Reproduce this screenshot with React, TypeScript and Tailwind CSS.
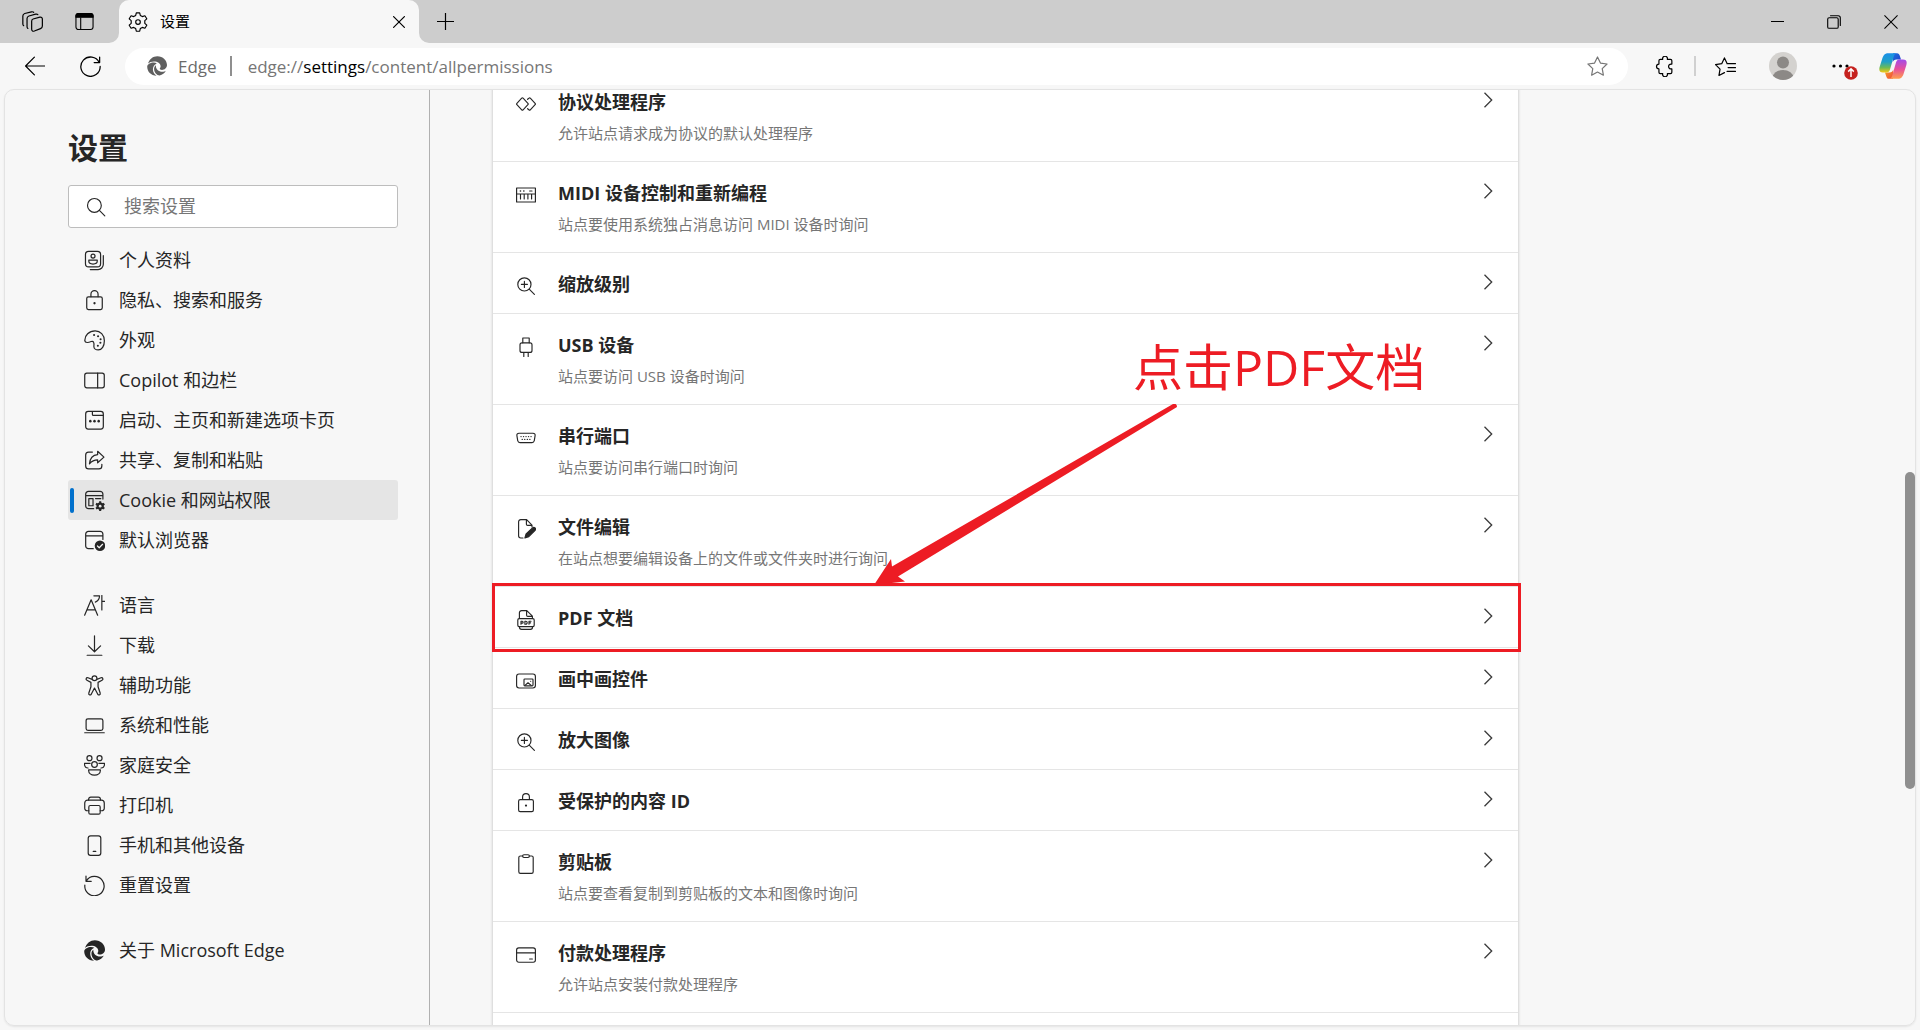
import React from "react";

type IconProps = { className?: string; children: React.ReactNode };

function Svg({ className = "size-5", children }: IconProps) {
  return (
    <svg
      viewBox="0 0 20 20"
      className={className}
      fill="none"
      stroke="currentColor"
      strokeWidth={1.15}
      strokeLinecap="round"
      strokeLinejoin="round"
      aria-hidden="true"
    >
      {children}
    </svg>
  );
}

const edgeSwirl = (
  <g fill="currentColor" stroke="none">
    <path d="M1 7.5C2.5 3 6 .2 10.3 .2C16 .2 20 4.5 20 9C20 12 17.5 13.9 15 13.9C13.6 13.9 12.8 13.3 12.8 12.7C12.8 12.2 13.6 11.6 13.6 10.2C13.6 7.4 10.6 5.4 7 5.4C4.6 5.4 2.4 6.2 1 7.5Z" />
    <path d="M.2 10.5C.6 8.2 3.6 6.6 6.6 6.6C8 6.6 9 6.9 9.8 7.4C7.4 8.2 5.9 10.6 5.9 13.2C5.9 16 7.4 18.4 9.6 19.8C4 19.6 .1 15.6 .2 10.5Z" />
    <path d="M8.9 9.3C7.6 10.2 7.1 11.6 7.1 13.1C7.1 16.6 9.8 19.6 12.6 19.6C15.4 18.8 17.6 17.2 18.9 14.8C17.9 15.5 16.8 15.8 15.3 15.8C11.6 15.8 8.6 13.2 8.9 9.3Z" />
  </g>
);

const lock = (
  <>
    <rect x="2.6" y="6.6" width="14.8" height="12" rx="1.6" />
    <path d="M6.6 6.4V4a3.4 3.4 0 0 1 6.8 0v2.4" />
    <circle cx="10" cy="12.6" r="1.1" fill="currentColor" stroke="none" />
  </>
);

const zoomIn = (
  <>
    <circle cx="8.4" cy="8.4" r="6.6" />
    <path d="M13.2 13.2l5.2 5.2M8.4 5.4v6M5.4 8.4h6" />
  </>
);

const icons: Record<string, React.ReactNode> = {
  profile: (
    <>
      <rect x="1.4" y="1.4" width="14.4" height="14.6" rx="3" />
      <circle cx="8.6" cy="5.8" r="1.9" />
      <path d="M4.6 9.6h8v1.2c0 1.6-1.8 2.6-4 2.6s-4-1-4-2.6z" />
      <path d="M18.4 5.4v8.2a5 5 0 0 1-5 5H6" />
    </>
  ),
  lock,
  palette: (
    <>
      <path d="M.8 10.4C.4 5 5 .8 10.6.8c5 0 8.8 3.8 8.8 9.4 0 5-2.4 8.8-5.8 8.8-2.2 0-4.2-1.4-4.2-3.4 0-1.6.4-2.4-.2-3.8-.4-1-1.2-1.2-2.4-.8-2 .8-5.7 1.8-6-.6z" />
      <g fill="currentColor" stroke="none">
        <circle cx="9.6" cy="4.8" r="1" />
        <circle cx="13.4" cy="6" r="1" />
        <circle cx="15.8" cy="8.8" r="1" />
        <circle cx="15.6" cy="12.2" r="1" />
        <circle cx="13.2" cy="15" r="1" />
      </g>
    </>
  ),
  sidebar: (
    <>
      <rect x=".7" y="3" width="18.6" height="14" rx="2" />
      <path d="M13 3v14" />
    </>
  ),
  startup: (
    <>
      <rect x="1.6" y="1.4" width="16.8" height="16.8" rx="2.4" />
      <path d="M8 1.6v2.6c0 .6.4 1 1 1h9" />
      <g fill="currentColor" stroke="none">
        <circle cx="6" cy="10.6" r="1.2" />
        <circle cx="10" cy="10.6" r="1.2" />
        <circle cx="14" cy="10.6" r="1.2" />
      </g>
    </>
  ),
  share: (
    <>
      <path d="M8 2H4.4A2.8 2.8 0 0 0 1.6 4.8v10.4A2.8 2.8 0 0 0 4.4 18h9.8a2.8 2.8 0 0 0 2.8-2.8v-1.6" />
      <path d="M13 1.2l6 5.6-6 5.4V9.4c-3.4 0-5.6 1.2-7.8 3.8.4-4.6 3-8.4 7.8-8.8z" />
    </>
  ),
  cookie: (
    <>
      <path d="M18 8.6V4a2.6 2.6 0 0 0-2.6-2.6H4.2A2.6 2.6 0 0 0 1.6 4v11.2a2.6 2.6 0 0 0 2.6 2.6h5M1.6 5.4H18" />
      <path d="M4.6 8.2h4v6.8h-4zM11 8.2h5" />
      <g fill="currentColor">
        <circle cx="15.4" cy="15.4" r="2.9" />
        <path d="M15.4 10.8v9.2M11.4 13.1l8 4.6M19.4 13.1l-8 4.6" strokeWidth="2" strokeLinecap="butt" />
      </g>
      <circle cx="15.4" cy="15.4" r="1.3" fill="#e5e5e5" stroke="none" />
    </>
  ),
  browser: (
    <>
      <path d="M18 9V4a2.6 2.6 0 0 0-2.6-2.6H4.2A2.6 2.6 0 0 0 1.6 4v11.2a2.6 2.6 0 0 0 2.6 2.6h4.6M1.6 5.6H18" />
      <circle cx="15.2" cy="15" r="5" fill="currentColor" stroke="none" />
      <path d="M12.8 15.2l1.7 1.7 3.2-3.3" stroke="#f7f7f7" />
    </>
  ),
  language: (
    <>
      <path d="M.6 19.2L6.8 4.6 13 19.2M2.8 14.2h8" />
      <path d="M9.4.8h5.4c0 3-1.6 5-4 6M17 .4v13.8M17 6h2.8" />
    </>
  ),
  download: <path d="M10 .8v15M4.2 10.4L10 16l5.8-5.6M3 19.3h14" />,
  accessibility: (
    <path d="M10 5.4a2.3 2.3 0 1 0 0-4.6 2.3 2.3 0 0 0 0 4.6zM7.7 4.2L3.8 2.6C2.2 2 1.2 4.2 2.8 5L6.6 7v4.2l-2 6c-.6 1.8 1.8 2.6 2.4.9L10 12.4l3 5.7c.6 1.7 3 .9 2.4-.9l-2-6V7l3.8-2c1.6-.8.6-3-1-2.4l-3.900 1.600" />
  ),
  laptop: (
    <>
      <rect x="2" y="3.6" width="16" height="11" rx="1.8" />
      <path d="M.7 16.9h18.6" />
    </>
  ),
  family: (
    <>
      <circle cx="5.2" cy="3" r="2.4" />
      <circle cx="14.8" cy="3" r="2.4" />
      <circle cx="10" cy="9" r="2.7" />
      <path d="M4.4 14.2h11.2v.6c0 2.4-2.2 4.400-5.600 4.400s-5.600-2-5.600-4.400z" />
      <path d="M5.800 8H.4c0 2.600 1.200 4.200 3.400 4.400M14.200 8h5.400c0 2.600-1.200 4.200-3.400 4.400" />
    </>
  ),
  printer: (
    <>
      <path d="M4.6 15H3a2.3 2.3 0 0 1-2.3-2.3V7.6A2.8 2.8 0 0 1 3.5 4.8h13a2.8 2.8 0 0 1 2.8 2.8v5.1A2.3 2.3 0 0 1 17 15h-1.6" />
      <path d="M4.4 4.8V4a2 2 0 0 1 2-2h7.2a2 2 0 0 1 2 2v.8" />
      <rect x="4.6" y="10" width="10.8" height="8.2" rx="1.4" />
    </>
  ),
  phone: (
    <>
      <rect x="4" y=".8" width="12" height="18.6" rx="2.2" />
      <path d="M8.8 15.6h2.4" />
    </>
  ),
  reset: <path d="M1.9 1v5h5M2.2 5.6a9.2 9.2 0 1 1-1.4 4" />,
  edge: edgeSwirl,
  protocol: (
    <>
      <path d="M5.7 4.2a1 1 0 0 1 1.4 0l4.8 5.1a1 1 0 0 1 0 1.4l-4.8 5.1a1 1 0 0 1-1.4 0L.9 10.7a1 1 0 0 1 0-1.4z" />
      <path d="M11.6 5.3l1.3-1.1a1 1 0 0 1 1.4 0l4.8 5.1a1 1 0 0 1 0 1.4l-4.8 5.1a1 1 0 0 1-1.4 0l-1.3-1.1" />
    </>
  ),
  midi: (
    <>
      <path d="M.6 3h18.8v14H.6zM.6 9h18.8M4.5 9v5M8.2 9v5M11.9 9v5M15.6 9v5M13.6 6H16" />
      <path d="M4.4 6h.1M7.8 6h.1" strokeWidth="1.6" />
    </>
  ),
  zoomIn,
  usb: (
    <>
      <rect x="4" y="5.8" width="12" height="9.6" rx="2" />
      <path d="M6.8 5.8V1h6.4v4.8M7.8 15.6v4M12.2 15.6v4" />
    </>
  ),
  serial: (
    <>
      <path d="M3 5.2h14c1.4 0 2.4 1 2.1 2.4l-.8 5c-.3 1.2-1.2 2-2.3 2H4c-1.1 0-2-.8-2.3-2l-.8-5C.6 6.2 1.6 5.2 3 5.2z" />
      <path d="M5 8.6h.1M7.5 8.6h.1M10 8.6h.1M12.5 8.6h.1M15 8.6h.1M6.2 11.4h.1M8.7 11.4h.1M11.3 11.4h.1M13.8 11.4h.1" strokeWidth="1.3" />
    </>
  ),
  fileEdit: (
    <>
      <path d="M7 19H4.8A2.2 2.2 0 0 1 2.6 16.8V2.8A2.2 2.2 0 0 1 4.8.6h5.800L16 6.200V8M10.400.8v4.400c0 .8.400 1.200 1.200 1.200h4.200" />
      <path d="M8.9 19l1.2-4.2 6.4-5.9c1.7-1.5 4.2.8 2.600 2.500l-6.300 6.200z" fill="currentColor" />
    </>
  ),
  pdf: (
    <>
      <path d="M3.4 8.4V2.8A2.2 2.2 0 0 1 5.6.6h5.200l5.600 5.600v2.200M10.600.8v4.400c0 .8.400 1.200 1.200 1.200h4.400" />
      <rect x="1.8" y="8.6" width="16.4" height="8" rx="1.4" />
      <path d="M3.4 16.8c0 1.6.8 2.600 2.200 2.600h8.800c1.400 0 2.200-1 2.200-2.600" />
      <path d="M5 14.200v-3h1.200a.8.800 0 0 1 0 1.900H5M8.900 11.200v3h.8a1.300 1.300 0 0 0 0-3zM13 14.200v-3h2M13 12.800h1.600" />
    </>
  ),
  pip: (
    <>
      <rect x=".6" y="3" width="18.8" height="14" rx="2.4" />
      <rect x="8" y="8" width="9" height="6.8" rx=".8" />
      <path d="M9 14.4l3-2.6 3.2 2.6M14.6 10.2h.1" />
    </>
  ),
  clipboard: (
    <>
      <rect x="2.8" y="2" width="14.4" height="17.4" rx="1.6" />
      <rect x="6.6" y=".7" width="6.8" height="2.8" rx="1.4" fill="#fff" />
    </>
  ),
  card: (
    <>
      <rect x=".6" y="2.8" width="18.8" height="14.4" rx="2.2" />
      <path d="M.6 7.8h18.8M13.6 14h2.8" />
    </>
  ),
};

const navGroups: { icon: string; label: string; active?: boolean }[][] = [
  [
    { icon: "profile", label: "个人资料" },
    { icon: "lock", label: "隐私、搜索和服务" },
    { icon: "palette", label: "外观" },
    { icon: "sidebar", label: "Copilot 和边栏" },
    { icon: "startup", label: "启动、主页和新建选项卡页" },
    { icon: "share", label: "共享、复制和粘贴" },
    { icon: "cookie", label: "Cookie 和网站权限", active: true },
    { icon: "browser", label: "默认浏览器" },
  ],
  [
    { icon: "language", label: "语言" },
    { icon: "download", label: "下载" },
    { icon: "accessibility", label: "辅助功能" },
    { icon: "laptop", label: "系统和性能" },
    { icon: "family", label: "家庭安全" },
    { icon: "printer", label: "打印机" },
    { icon: "phone", label: "手机和其他设备" },
    { icon: "reset", label: "重置设置" },
  ],
  [{ icon: "edge", label: "关于 Microsoft Edge" }],
];

const permissions: { icon: string; title: string; desc?: string; marked?: boolean }[] = [
  { icon: "protocol", title: "协议处理程序", desc: "允许站点请求成为协议的默认处理程序" },
  { icon: "midi", title: "MIDI 设备控制和重新编程", desc: "站点要使用系统独占消息访问 MIDI 设备时询问" },
  { icon: "zoomIn", title: "缩放级别" },
  { icon: "usb", title: "USB 设备", desc: "站点要访问 USB 设备时询问" },
  { icon: "serial", title: "串行端口", desc: "站点要访问串行端口时询问" },
  { icon: "fileEdit", title: "文件编辑", desc: "在站点想要编辑设备上的文件或文件夹时进行询问" },
  { icon: "pdf", title: "PDF 文档", marked: true },
  { icon: "pip", title: "画中画控件" },
  { icon: "zoomIn", title: "放大图像" },
  { icon: "lock", title: "受保护的内容 ID" },
  { icon: "clipboard", title: "剪贴板", desc: "站点要查看复制到剪贴板的文本和图像时询问" },
  { icon: "card", title: "付款处理程序", desc: "允许站点安装付款处理程序" },
];

function TabStrip() {
  return (
    <header className="flex h-[43px] shrink-0 items-stretch bg-[#cdcdcd] text-black">
      <div className="flex w-[119px] items-center pl-[22px]">
        <button aria-label="工作区" className="mr-8">
          <Svg className="size-[21px]">
            <path d="M10.600 7.600l6.400-1.700c1.400-.3 2.400.4 2.400 1.800v6.600c0 1.200-.6 2-1.800 2.500l-5.800 2.300c-1.400.5-2.600-.2-2.600-1.600V9.800c0-1.200.4-1.900 1.400-2.200z" />
            <path d="M5.600 16.600c-.5-.3-.8-.8-.8-1.600V7.200c0-1.300.6-2 1.800-2.400l6.400-1.800c.9-.2 1.600-.1 2.100.4" />
            <path d="M1.600 14c-.5-.3-.8-.8-.8-1.600V4.800c0-1.300.6-2 1.800-2.400L9 .8c.9-.2 1.600-.1 2.100.4" />
          </Svg>
        </button>
        <button aria-label="标签页操作菜单">
          <Svg className="size-[19px]">
            <rect x="1" y="1.5" width="18" height="17" rx="2.6" />
            <path d="M1 5.500V4a2.600 2.600 0 0 1 2.600-2.500h12.800A2.600 2.600 0 0 1 19 4v1.500z" fill="currentColor" />
            <path d="M6 6v12.4" />
          </Svg>
        </button>
      </div>
      <div className="relative flex w-[300px] items-center rounded-t-[10px] bg-[#f7f7f7] pr-2.5 pl-[9px]">
        <svg className="absolute bottom-0 -left-2.5 size-2.5" viewBox="0 0 10 10" aria-hidden="true">
          <path d="M10 0v10H0A10 10 0 0 0 10 0z" fill="#f7f7f7" />
        </svg>
        <svg className="absolute -right-2.5 bottom-0 size-2.5" viewBox="0 0 10 10" aria-hidden="true">
          <path d="M0 0v10h10A10 10 0 0 1 0 0z" fill="#f7f7f7" />
        </svg>
        <Svg className="size-5">
          <path d="M8.300.8h3.400l.6 2.600 2 1.200 2.600-.8 1.900 3-2 1.900v2.600l2 1.900-1.900 3-2.600-.8-2 1.200-.6 2.600H8.300l-.6-2.600-2-1.200-2.600.8-1.900-3 2-1.900V8.700l-2-1.900 1.900-3 2.600.8 2-1.200z" />
          <circle cx="10" cy="10" r="2.3" />
        </Svg>
        <span className="ml-3 grow text-[15px]">设置</span>
        <button aria-label="关闭标签页" className="p-1">
          <Svg className="size-3">
            <path d="M1 1l18 18M19 1L1 19" strokeWidth="2" />
          </Svg>
        </button>
      </div>
      <button aria-label="新建标签页" className="ml-[18px] self-center">
        <Svg className="size-[17px]">
          <path d="M10 0v20M0 10h20" strokeWidth="1.4" />
        </Svg>
      </button>
      <div className="ml-auto flex items-center pr-[22px]">
        <button aria-label="最小化" className="mr-[43px]">
          <Svg className="size-[13px]">
            <path d="M0 10h20" strokeWidth="1.7" />
          </Svg>
        </button>
        <button aria-label="还原" className="mr-[43px]">
          <Svg className="size-[14px]">
            <rect x="1" y="4" width="15" height="15" rx="2" strokeWidth="1.6" />
            <path d="M5 1h11a3 3 0 0 1 3 3v11" strokeWidth="1.6" />
          </Svg>
        </button>
        <button aria-label="关闭">
          <Svg className="size-[14px]">
            <path d="M1 1l18 18M19 1L1 19" strokeWidth="1.5" />
          </Svg>
        </button>
      </div>
    </header>
  );
}

const starPath = "M10 .9l2.800 5.800 6.300.9-4.600 4.400 1.100 6.300L10 15.300l-5.600 3 1.100-6.300L.9 7.600l6.300-.9z";

function Toolbar() {
  return (
    <div className="flex h-[46px] shrink-0 items-center pr-[13px] pl-[25px] text-black">
      <button aria-label="后退">
        <Svg>
          <path d="M19.6 10H.6M9.4 1.200L.6 10l8.800 8.800" strokeWidth="1.2" />
        </Svg>
      </button>
      <button aria-label="刷新" className="ml-[35px]">
        <Svg className="size-[21px]">
          <path d="M18.3 6.2A9.2 9.2 0 1 0 19.2 10M18.7 1v5.2h-5.2" strokeWidth="1.2" />
        </Svg>
      </button>
      <div className="ml-6 flex h-[37px] min-w-0 grow items-center rounded-full bg-white pr-5 pl-[22px] text-[17px]">
        <span className="text-[#5f5f5f]">
          <Svg>{edgeSwirl}</Svg>
        </span>
        <span className="ml-[11px] pt-0.5 text-[#6b6b6b]">Edge</span>
        <span className="ml-[13px] h-5 w-0.5 bg-[#8f8f8f]" />
        <a href="#allpermissions" className="ml-4 grow truncate pt-0.5 text-[#767676]">
          edge://<span className="text-black">settings</span>/content/allpermissions
        </a>
        <button aria-label="收藏此页" className="text-[#767676]">
          <Svg className="size-[21px]">
            <path d={starPath} />
          </Svg>
        </button>
      </div>
      <button aria-label="扩展" className="ml-[26px]">
        <Svg className="size-[21px]">
          <path d="M6 3.2h2.300a2.300 2.300 0 1 1 4.400 0h3A1.300 1.300 0 0 1 17 4.500v3.200h-.8a2.300 2.300 0 1 0 0 4.600h.8v3.200a1.300 1.300 0 0 1-1.300 1.300h-3a2.300 2.300 0 1 1-4.400 0H6a1.300 1.300 0 0 1-1.300-1.300v-3.200a2.300 2.300 0 1 1 0-4.600V4.500A1.300 1.300 0 0 1 6 3.200z" />
        </Svg>
      </button>
      <span className="ml-[19px] h-5 w-0.5 bg-[#d0d0d0]" />
      <button aria-label="收藏夹" className="ml-[19px]">
        <Svg className="size-[21px]">
          <path d="M9 15.8l-5.200 2.700 1-6L.5 8.200l5.900-.9L9 1.800l2.500 5.300M11.500 7.300h8M12.500 11h7M11.500 14.700h8" />
        </Svg>
      </button>
      <button aria-label="个人资料" className="ml-[33px]">
        <svg viewBox="0 0 28 28" className="size-7" aria-hidden="true">
          <clipPath id="avatar">
            <circle cx="14" cy="14" r="14" />
          </clipPath>
          <g clipPath="url(#avatar)">
            <rect width="28" height="28" fill="#d4d2cf" />
            <circle cx="14" cy="10.5" r="6" fill="#8c8986" />
            <ellipse cx="14" cy="26" rx="10.5" ry="8" fill="#8c8986" />
          </g>
        </svg>
      </button>
      <button aria-label="设置及其他" className="relative ml-[34px]">
        <svg viewBox="0 0 28 28" className="size-7" aria-hidden="true">
          <circle cx="3" cy="14" r="1.6" />
          <circle cx="9.5" cy="14" r="1.6" />
          <circle cx="16" cy="14" r="1.6" />
          <circle cx="20" cy="21" r="6.8" fill="#c5221f" />
          <path d="M20 25v-8M17.2 19.6L20 16.8l2.8 2.8" fill="none" stroke="#fff" strokeWidth="1.5" />
        </svg>
      </button>
      <button aria-label="Copilot" className="ml-5">
        <svg viewBox="0 0 28 28" className="size-7" aria-hidden="true">
          <defs>
            <linearGradient id="cpA" x1="0" y1="0" x2="0" y2="1">
              <stop offset="0" stopColor="#1a8fe8" />
              <stop offset=".45" stopColor="#1fa0c8" />
              <stop offset=".75" stopColor="#6dbb55" />
              <stop offset="1" stopColor="#f5c816" />
            </linearGradient>
            <linearGradient id="cpB" x1="0" y1="0" x2="0" y2="1">
              <stop offset="0" stopColor="#a24bea" />
              <stop offset=".5" stopColor="#e8509a" />
              <stop offset="1" stopColor="#ffa04a" />
            </linearGradient>
            <linearGradient id="cpC" x1="0" y1="0" x2="1" y2="1">
              <stop offset="0" stopColor="#1b6fe0" />
              <stop offset="1" stopColor="#2440c8" />
            </linearGradient>
            <linearGradient id="cpD" x1="0" y1="0" x2="1" y2="1">
              <stop offset="0" stopColor="#f5a623" />
              <stop offset="1" stopColor="#f0463c" />
            </linearGradient>
          </defs>
          <path d="M14 1.200h4c1.600 0 2.300 1 2.800 2.600L22 7.600h-4.500c-2 0-3.200.8-3.800 2.800z" fill="url(#cpC)" />
          <path d="M14 26.800h-4c-1.600 0-2.300-1-2.800-2.600L6 20.400h4.500c2 0 3.200-.8 3.800-2.800z" fill="url(#cpD)" />
          <path d="M17 1.200H9C5.800 1.200 4.300 3.400 3.300 6.600L.7 14.800C-.4 18.400.8 20.400 4 20.400h3.400c2 0 3-1 3.600-3l3.300-11.400C15 3.600 15.600 1.800 17 1.200z" fill="url(#cpA)" />
          <path d="M11 26.800h8c3.200 0 4.700-2.200 5.700-5.400l2.600-8.200c1.100-3.600-.1-5.600-3.300-5.600h-3.400c-2 0-3 1-3.600 3L13.700 22c-.7 2.400-1.300 4.200-2.700 4.800z" fill="url(#cpB)" />
        </svg>
      </button>
    </div>
  );
}

function Sidebar() {
  return (
    <aside className="w-[425px] shrink-0 border-r border-[#b0b0b0] pr-[31px] pl-[63px]">
      <h1 className="pt-9 text-[30px] leading-[44px] font-bold">设置</h1>
      <label className="mt-[15px] flex h-[43px] items-center rounded-[3px] border border-[#bdbdbd] bg-white pl-[17px]">
        <Svg>
          <circle cx="8.4" cy="8.4" r="6.9" />
          <path d="M13.4 13.4l5.4 5.4" />
        </Svg>
        <input
          type="search"
          aria-label="搜索设置"
          placeholder="搜索设置"
          className="ml-[18px] min-w-0 grow bg-transparent text-[18px] outline-none placeholder:text-[#767676]"
        />
      </label>
      <nav className="mt-3 flex flex-col gap-[25px]">
        {navGroups.map((group, i) => (
          <ul key={i}>
            {group.map((item) => (
              <li key={item.label}>
                <a
                  href="#settings"
                  aria-current={item.active ? "page" : undefined}
                  className={
                    item.active
                      ? "flex h-10 items-center rounded-[3px] bg-[#e5e5e5] pl-0.5"
                      : "flex h-10 items-center pl-0.5"
                  }
                >
                  <span
                    className={
                      item.active ? "mr-2.5 h-[25px] w-1 rounded-sm bg-[#0070cc]" : "mr-2.5 w-1"
                    }
                  />
                  <Svg className="size-[21px]">{icons[item.icon]}</Svg>
                  <span className="ml-3.5 text-[18px] whitespace-nowrap">{item.label}</span>
                </a>
              </li>
            ))}
          </ul>
        ))}
      </nav>
    </aside>
  );
}

function Annotation() {
  return (
    <div className="pointer-events-none absolute top-[260px] left-[381px] w-[560px] text-[#ed1c24]">
      <p className="pl-[259px] text-[50px] leading-[73px] whitespace-nowrap">点击PDF文档</p>
      <svg viewBox="0 0 304 182" className="h-[182px] w-[304px]" fill="currentColor" aria-hidden="true">
        <path d="M299 0Q303 -1 303 3L24 172.500 31 177.500 0 181 17 155 18 162.500z" />
      </svg>
    </div>
  );
}

function Permissions() {
  return (
    <main className="min-w-0 grow overflow-hidden pl-[63px]">
      <div className="relative -mt-[19px] w-full max-w-[1025px] bg-white pb-8 shadow-[0_0_3px_rgba(0,0,0,0.25)]">
        <ul>
          {permissions.map((p) => (
            <li key={p.title} className="relative border-b border-[#e5e5e5]">
              <button className="flex w-full items-start pt-[19px] pr-[25px] pb-4 pl-[23px] text-left">
                <Svg className="mt-1 size-5 shrink-0">{icons[p.icon]}</Svg>
                <span className="ml-[22px] grow">
                  <span className="block text-[18px] leading-[25px] font-bold">{p.title}</span>
                  {p.desc && (
                    <span className="mt-[7px] block pb-px text-[15px] leading-[22px] text-[#767676]">{p.desc}</span>
                  )}
                </span>
                <svg viewBox="0 0 10 16" className="mt-0.5 h-4 w-2.5" fill="none" stroke="#3a3a3a" strokeWidth="1.3" aria-hidden="true">
                  <path d="M1.5 .8L8.7 8l-7.2 7.2" />
                </svg>
              </button>
              {p.marked && (
                <div className="pointer-events-none absolute -top-1 -right-[3px] -bottom-[5px] -left-px z-10 border-3 border-[#ed1c24]" />
              )}
            </li>
          ))}
        </ul>
        <Annotation />
      </div>
    </main>
  );
}

export default function App() {
  return (
    <div className="flex h-screen flex-col overflow-hidden bg-[#f7f7f7] font-['Open_Sans','Noto_Sans_CJK_SC',sans-serif] text-[#262626]">
      <TabStrip />
      <Toolbar />
      <div className="mx-1 mb-1 flex min-h-0 grow overflow-hidden rounded-[10px] border border-[#e3e3e3] shadow-[0_1px_2px_rgba(0,0,0,0.08)]">
        <Sidebar />
        <Permissions />
        <div className="w-2.5 shrink-0 pt-[382px]">
          <div className="h-[317px] rounded-full bg-[#8f8f8f]" />
        </div>
      </div>
    </div>
  );
}
